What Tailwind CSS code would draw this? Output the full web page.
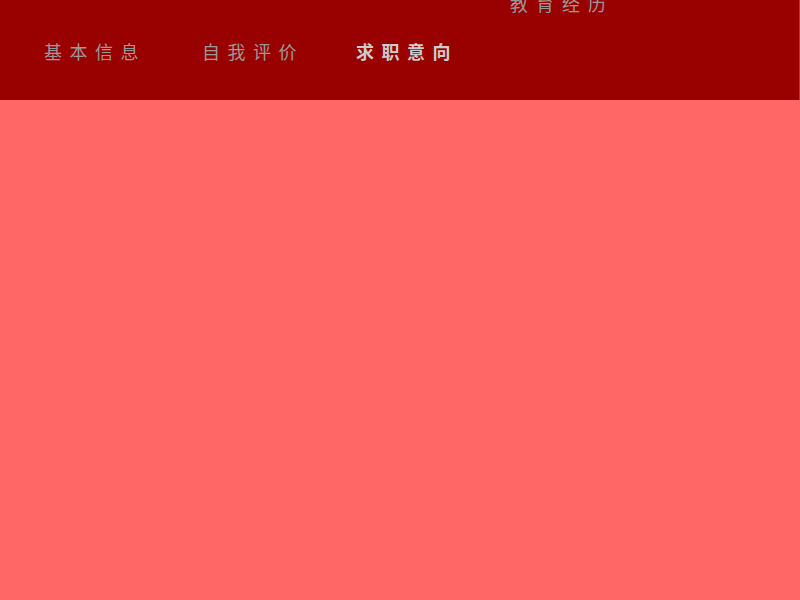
<!DOCTYPE html>
<html lang="zh-CN">
<head>
  <meta charset="UTF-8">
  <title>简历</title>
  <script src="https://cdn.jsdelivr.net/npm/@tailwindcss/browser@4"></script>
</head>
<body class="bg-[#ff6666] h-[600px] overflow-hidden font-['Noto_Sans_CJK_SC',sans-serif]">
  <!-- nav wraps, first row is cut off by the top of the window -->
  <nav class="h-[100px] bg-[#990000] border-r border-[#b33] overflow-hidden text-[18px] leading-[26px] tracking-[7.5px] text-[#999]">
    <div class="flex pl-[510px] -mt-[10px] tracking-[8px]">
      <a>教育经历</a>
    </div>
    <div class="flex pl-[44px] mt-[22px]">
      <a>基本信息</a>
      <a class="ml-[56px]">自我评价</a>
      <a class="ml-[52px] font-bold text-[#ccc]">求职意向</a>
    </div>
  </nav>
</body>
</html>
